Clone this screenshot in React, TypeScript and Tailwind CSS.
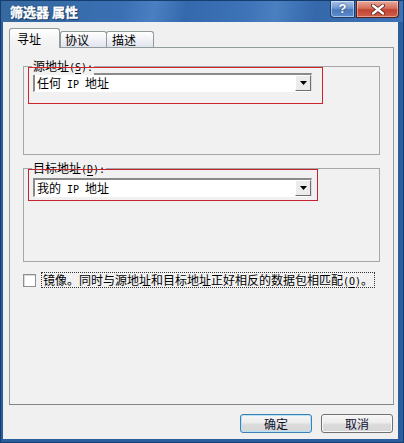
import React from "react";

function Mono({ children, u }: { children: React.ReactNode; u?: boolean }) {
  return (
    <span className={"font-['DejaVu_Sans_Mono',monospace] text-[10px] " + (u ? "underline underline-offset-2" : "")}>
      {children}
    </span>
  );
}

function Combo({ children }: { children: React.ReactNode }) {
  return (
    <div className="w-[279px] h-[19px] border-t-2 border-l-2 border-t-[#8a8a8a] border-l-[#8a8a8a] border-b border-r border-b-[#ffffff] border-r-[#dcdcdc] bg-white flex items-stretch">
      <div className="flex-1 pl-[2px] text-[12px] leading-[15px] text-black whitespace-pre">{children}</div>
      <div className="w-[16px] bg-[#ececec] border border-t-[#ffffff] border-l-[#ffffff] border-b-[#6f6f6f] border-r-[#6f6f6f] flex items-center justify-center">
        <svg width="7" height="4" viewBox="0 0 7 4">
          <path d="M0 0H7L3.5 4Z" fill="#000" />
        </svg>
      </div>
    </div>
  );
}

export default function App() {
  return (
    <div className="w-[404px] h-[443px] flex flex-col bg-[#2a5e9f] border border-[#163d70] overflow-hidden font-['Noto_Sans_CJK_SC',sans-serif]">
      {/* Title bar */}
      <div className="h-[21px] flex items-start bg-[linear-gradient(100deg,#35699f_0%,#3a6fb3_30%,#4a80c2_38%,#3569ad_46%,#3c72b6_60%,#4a7fc0_68%,#3468ab_78%,#3d73b6_100%)]">
        <div className="pl-[9px] pt-[3px] text-white font-bold text-[13px] leading-[15px] [-webkit-text-stroke:0.4px_white] [text-shadow:0_0_2px_#0b2a55,1px_1px_1px_#0b2a55]">
          筛选器 属性
        </div>
        <div className="ml-auto mr-[4px] flex gap-[1px]">
          <div className="w-[25px] h-[17px] rounded-bl-[4px] border border-t-0 border-[#1b3d6c] bg-[linear-gradient(180deg,#a9c3e6_0%,#7097cf_45%,#4a78bb_55%,#5f8fd0_100%)] shadow-[inset_0_0_0_1px_rgba(255,255,255,0.45)] flex items-center justify-center">
            <span className="text-white font-bold text-[13px] leading-[14px] font-['Liberation_Sans',sans-serif] [text-shadow:0_0_2px_#1b3d6c]">?</span>
          </div>
          <div className="w-[43px] h-[17px] rounded-br-[4px] border border-t-0 border-[#5b1d16] bg-[linear-gradient(180deg,#e9a89a_0%,#d5705f_45%,#c24432_55%,#d0604a_100%)] shadow-[inset_0_0_0_1px_rgba(255,255,255,0.4)] flex items-center justify-center">
            <svg width="14" height="11" viewBox="0 0 14 11">
              <path d="M2 1.5L12 9.5M12 1.5L2 9.5" stroke="#5b1d16" strokeWidth="4" strokeLinecap="round" />
              <path d="M2 1.5L12 9.5M12 1.5L2 9.5" stroke="#fff" strokeWidth="2.4" strokeLinecap="round" />
            </svg>
          </div>
        </div>
      </div>

      {/* Client */}
      <div className="flex-1 ml-[2px] mr-[5px] mb-[3px] bg-[#f0f0f0] flex flex-col">
        <div className="pt-[6px] pl-[6px] pr-[4px]">
          {/* Tabs */}
          <div className="flex items-end h-[19px]">
            <div className="relative z-10 w-[51px] h-[20px] -mb-[1px] border border-b-0 border-[#919b9c] rounded-t-[3px] bg-[linear-gradient(180deg,#ffffff_0%,#f4f4f4_60%,#f1f1f1_100%)] pl-[7px] pt-[3px] text-[12px] leading-[14px] text-black">
              寻址
            </div>
            <div className="w-[47px] h-[16px] border border-b-0 border-[#919b9c] rounded-t-[3px] bg-[linear-gradient(180deg,#ffffff_0%,#f1f2f6_50%,#dfe3ec_100%)] pl-[4px] pt-[1px] text-[12px] leading-[14px] text-black">
              协议
            </div>
            <div className="-ml-px w-[48px] h-[16px] border border-b-0 border-[#919b9c] rounded-t-[3px] bg-[linear-gradient(180deg,#ffffff_0%,#f1f2f6_50%,#dfe3ec_100%)] pl-[5px] pt-[1px] text-[12px] leading-[14px] text-black">
              描述
            </div>
          </div>

          {/* Panel */}
          <div className="h-[358px] border border-[#919b9c] border-b-[#7f8488] bg-[#f1f1f1] flex flex-col px-[13px]">
            {/* Group 1 */}
            <div className="relative mt-[18px] h-[89px] border border-[#a7a7a7]">
              <div className="absolute left-[8px] -top-[8px] px-[1px] bg-[#f1f1f1] text-[12px] leading-[14px] text-black">
                源地址<Mono>(</Mono><Mono u>S</Mono><Mono>):</Mono>
              </div>
              <div className="pl-[9px] pt-[6px]">
                <Combo>
                  任何<Mono> IP </Mono>地址
                </Combo>
              </div>
              <div className="absolute left-[4px] top-0 w-[295px] h-[37px] border border-[#d2232a] pointer-events-none" />
            </div>

            {/* Group 2 */}
            <div className="relative mt-[13px] h-[94px] border border-[#a7a7a7]">
              <div className="absolute left-[8px] -top-[8px] px-[1px] bg-[#f1f1f1] text-[12px] leading-[14px] text-black">
                目标地址<Mono>(</Mono><Mono u>D</Mono><Mono>):</Mono>
              </div>
              <div className="pl-[9px] pt-[9px]">
                <Combo>
                  我的<Mono> IP </Mono>地址
                </Combo>
              </div>
              <div className="absolute left-[4px] top-0 w-[290px] h-[32px] border border-[#c2232c] pointer-events-none" />
            </div>

            {/* Checkbox */}
            <div className="mt-[10px] flex items-center">
              <div className="w-[13px] h-[13px] bg-white border border-[#8e8f8f] shadow-[inset_1px_1px_0_#d8d8d8]" />
              <div className="ml-[5px] px-[1px] h-[16px] border border-dotted border-[#333] text-[12px] leading-[14px] text-black whitespace-nowrap">
                镜像。同时与源地址和目标地址正好相反的数据包相匹配<Mono>(</Mono><Mono u>O</Mono><Mono>)</Mono>。
              </div>
            </div>
          </div>
        </div>

        {/* Buttons */}
        <div className="mt-[9px] pr-[5px] flex justify-end gap-[9px]">
          <div className="w-[72px] h-[19px] rounded-[3px] border border-[#3c7fb1] shadow-[inset_0_0_0_1px_#b4e2f6] bg-[linear-gradient(180deg,#f6f6f6_0%,#ececec_48%,#dcdcdc_52%,#d6d6d6_100%)] flex items-center justify-center text-[12px] leading-[14px] text-[#101030]">
            确定
          </div>
          <div className="w-[72px] h-[19px] rounded-[3px] border border-[#707070] shadow-[inset_0_0_0_1px_#f8f8f8] bg-[linear-gradient(180deg,#f6f6f6_0%,#ececec_48%,#dcdcdc_52%,#d6d6d6_100%)] flex items-center justify-center text-[12px] leading-[14px] text-[#101030]">
            取消
          </div>
        </div>
      </div>
    </div>
  );
}
